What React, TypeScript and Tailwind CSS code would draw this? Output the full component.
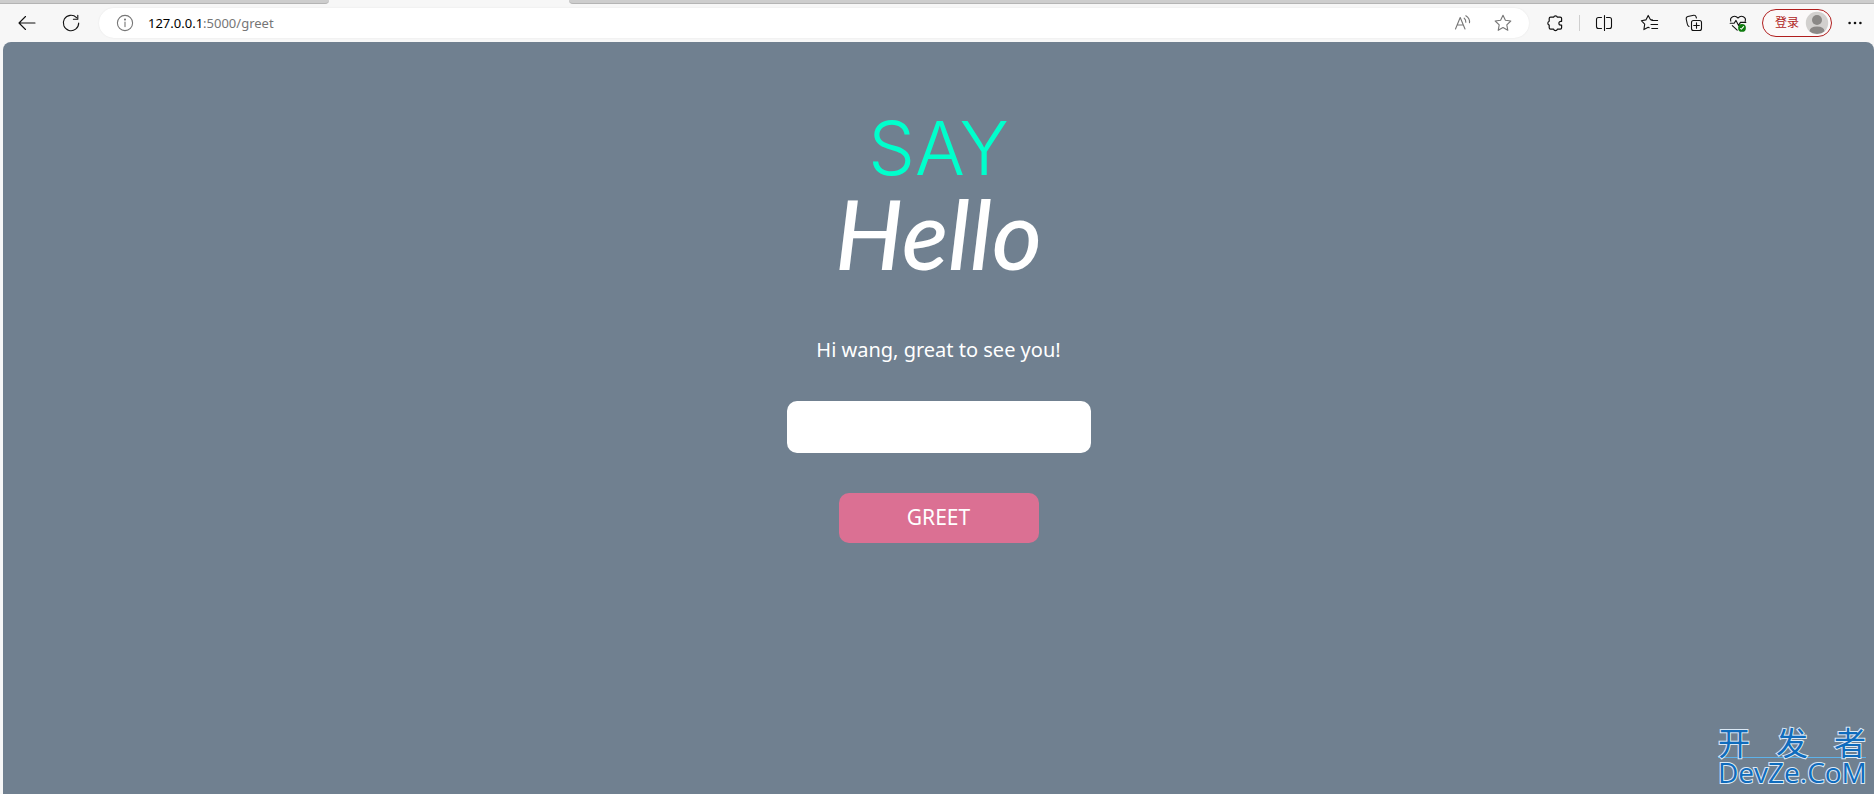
import React from "react";

type IconProps = { children: React.ReactNode; className?: string };

function Icon({ children, className = "text-[#111]" }: IconProps) {
  return (
    <svg
      viewBox="0 0 20 20"
      fill="none"
      stroke="currentColor"
      strokeWidth="1.1"
      strokeLinecap="round"
      strokeLinejoin="round"
      aria-hidden="true"
      className={`h-5 w-5 ${className}`}
    >
      {children}
    </svg>
  );
}

type ToolButtonProps = { label: string; children: React.ReactNode; className?: string };

function ToolButton({ label, children, className = "w-11" }: ToolButtonProps) {
  return (
    <button type="button" aria-label={label} className={`flex h-8 shrink-0 items-center justify-center ${className}`}>
      {children}
    </button>
  );
}

const STAR = "M10 2.2 L12.4 7.3 L17.8 8 L13.8 11.8 L14.8 17.3 L10 14.6 L5.2 17.3 L6.2 11.8 L2.2 8 L7.6 7.3 Z";

function TabStrip() {
  return (
    <div className="flex h-1 bg-[#f7f7f7]">
      <div className="w-[329px] rounded-br border-b border-[#b4b4b4] bg-[#cdcdcd]" />
      <div className="w-60" />
      <div className="flex-1 rounded-bl border-b border-[#b4b4b4] bg-[#cdcdcd]" />
    </div>
  );
}

function Toolbar() {
  return (
    <header className="flex h-[38px] items-center bg-[#f7f7f7] pl-[5px]">
      <ToolButton label="Back">
        <Icon>
          <path d="M2 10H18M8.5 3.5L2 10L8.5 16.5" />
        </Icon>
      </ToolButton>
      <ToolButton label="Refresh">
        <Icon>
          <path d="M15.5 4.6A7.7 7.7 0 1 0 17.7 10M16.8 2.2V6.2H12.4" />
        </Icon>
      </ToolButton>
      <div className="ml-1.5 flex h-[30px] flex-1 items-center rounded-full bg-white pr-1.5 pl-4 shadow-[0_0_2px_rgba(0,0,0,0.08)]">
        <Icon className="text-[#767676]">
          <circle cx="10" cy="10" r="7.6" />
          <path d="M10 9V13.6" />
          <circle cx="10" cy="6.6" r="0.5" fill="currentColor" />
        </Icon>
        <a href="#greet" className="ml-[13px] flex-1 text-[13px] leading-5 text-[#767676]">
          <span className="text-black">127.0.0.1</span>:5000/greet
        </a>
        <ToolButton label="Read aloud" className="w-10">
          <Icon className="text-[#767676]">
            <path d="M2.5 16L7.2 4.5L12 16M4.1 12H10.4" />
            <path d="M11.2 5.2Q13 6.6 12.8 9.2M12.8 2.8Q17 5.4 16.5 9.8" />
          </Icon>
        </ToolButton>
        <ToolButton label="Add to favorites" className="w-10">
          <Icon className="text-[#767676]">
            <path d={STAR} />
          </Icon>
        </ToolButton>
      </div>
      <ToolButton label="Extensions" className="ml-0.5 w-12">
        <Icon>
          <path
            strokeWidth="1.2"
            d="M5.6 4.2H8.6A2 2 0 0 1 12.4 4.2H15.2Q16.6 4.2 16.6 5.6V8.3H15.8A1.9 1.9 0 0 0 15.8 12.1H16.6V14.8Q16.6 16.2 15.2 16.2H12.4A2 2 0 0 1 8.6 16.2H5.6Q4.2 16.2 4.2 14.8V12.1A2 2 0 0 1 4.2 8.3V5.6Q4.2 4.2 5.6 4.2Z"
          />
        </Icon>
      </ToolButton>
      <div className="h-4 w-px bg-[#cfcfcf]" />
      <ToolButton label="Split screen" className="w-12">
        <Icon>
          <path
            strokeWidth="1.1"
            d="M10.5 2.5V17.5M7.5 4.5H4.5Q2.5 4.5 2.5 6.5V13.5Q2.5 15.5 4.5 15.5H7.5M12.5 4.5H15.5Q17.5 4.5 17.5 6.5V13.5Q17.5 15.5 15.5 15.5H12.5"
          />
        </Icon>
      </ToolButton>
      <ToolButton label="Favorites">
        <Icon>
          <path
            strokeWidth="1.1"
            d="M12.4 6.9L10.5 6.7L8.2 2.4L5.9 6.9L1.3 7.7L4.7 11.1L3.9 16.6L8.2 14.3L9.2 14.8M11.8 7.5H17.6M11 11.5H17.6M11.8 15.5H17.6"
          />
        </Icon>
      </ToolButton>
      <ToolButton label="Collections">
        <Icon>
          <path strokeWidth="1.1" d="M5 13.5Q3.6 12.8 3.3 11L2.2 6Q1.9 4 3.8 3.5L9.8 2.2Q11.6 2 12.1 3.8L12.4 5" />
          <rect strokeWidth="1.1" x="7.5" y="7.5" width="10" height="10" rx="2" />
          <path strokeWidth="1.1" d="M12.5 9.7V15.3M9.7 12.5H15.3" />
        </Icon>
      </ToolButton>
      <ToolButton label="Browser essentials">
        <Icon>
          <path
            strokeWidth="1.1"
            d="M2.8 8.2C1.5 4.2 6.6 1.4 10 5C13.4 1.4 18.5 4.2 17.2 8.2M2.2 10.3H6.2L8 7.4L10.6 12.4L12.4 9.4H17.8M4.3 12.6L9.2 17.2"
          />
          <circle cx="14" cy="14.9" r="3.9" fill="#107c10" stroke="none" />
          <path stroke="#fff" d="M12.6 15.6L13.4 16.1L15.6 13.7" />
        </Icon>
      </ToolButton>
      <button
        type="button"
        className="ml-0.5 flex h-7 w-[70px] shrink-0 items-center justify-between rounded-full border border-[#b01e1e] bg-[#fbf9f9] pr-0.5 pl-3 text-xs text-[#b01e1e]"
      >
        登录
        <svg viewBox="0 0 24 24" className="h-6 w-6" aria-hidden="true">
          <circle cx="12" cy="12" r="11.2" fill="#d2d0ce" />
          <circle cx="12" cy="9" r="5" fill="#8a8886" />
          <path d="M4.5 20.2Q5 15.6 12 15.6T19.5 20.2Q16.5 23 12 23T4.5 20.2Z" fill="#8a8886" />
        </svg>
      </button>
      <ToolButton label="Settings and more" className="ml-1 w-[38px]">
        <Icon>
          <g fill="currentColor" stroke="none">
            <circle cx="4.6" cy="10" r="1.3" />
            <circle cx="10" cy="10" r="1.3" />
            <circle cx="15.4" cy="10" r="1.3" />
          </g>
        </Icon>
      </ToolButton>
    </header>
  );
}

function Watermark() {
  return (
    <div className="absolute right-2 bottom-2 w-[148px] text-[#0f6cbd] [-webkit-text-stroke:2px_#dce9f5] [paint-order:stroke_fill]">
      <div className="flex h-7 items-center justify-between border-b border-[#5db2ea] font-['Liberation_Sans','Noto_Sans_CJK_SC',sans-serif] text-[32px] leading-8">
        <span>开</span>
        <span>发</span>
        <span>者</span>
      </div>
      <div className="text-center font-['Open_Sans',sans-serif] text-[28px] leading-7">DevZe.CoM</div>
    </div>
  );
}

export default function App() {
  return (
    <div className="flex min-h-screen flex-col bg-[#f7f7f7] font-['Noto_Sans','Noto_Sans_CJK_SC',sans-serif]">
      <TabStrip />
      <Toolbar />
      <main className="relative ml-[3px] flex flex-1 flex-col items-center rounded-t-lg bg-[#708090] pt-[60px] text-white">
        <h1 className="flex flex-col items-center">
          <span className="font-['Inter',sans-serif] text-[74px] leading-[92px] font-light text-[#00ffcc]">SAY</span>
          <span className="font-['Lato',sans-serif] text-[96px] leading-[78px] font-medium italic">Hello</span>
        </h1>
        <form className="flex flex-col items-center" onSubmit={(e) => e.preventDefault()}>
          <label htmlFor="name" className="mt-16 text-[20px] leading-7">
            Hi wang, great to see you!
          </label>
          <input
            id="name"
            type="text"
            className="mt-[37px] h-[52px] w-[304px] rounded-[10px] bg-white px-4 text-xl text-gray-800 outline-none"
          />
          <button type="submit" className="mt-10 h-[50px] w-[200px] rounded-[10px] bg-[#db7093] text-[21px]">
            GREET
          </button>
        </form>
        <Watermark />
      </main>
    </div>
  );
}
